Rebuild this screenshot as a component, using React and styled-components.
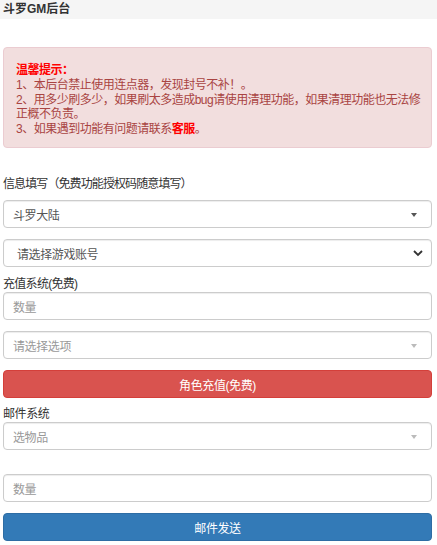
import React from 'react';
import styled, { createGlobalStyle } from 'styled-components';

const GlobalStyle = createGlobalStyle`
  body {
    margin: 0;
    background: #fff;
    font-family: "Liberation Sans", "Noto Sans CJK SC", sans-serif;
    font-size: 12px;
    color: #333;
  }
`;

const Header = styled.div`
  height: 19px;
  line-height: 19px;
  background: #f5f5f5;
  padding-left: 3px;
  font-size: 12px;
  font-weight: bold;
  color: #333;
`;

const Page = styled.div`
  width: 429px;
  padding-left: 3px;
  display: flex;
  flex-direction: column;
  letter-spacing: -0.4px;
`;

const Alert = styled.div`
  margin-top: 28px;
  height: 101px;
  box-sizing: border-box;
  padding: 15px 6px 0 12px;
  background: #f2dede;
  border: 1px solid #ebccd1;
  border-radius: 4px;
  color: #a94442;
  font-size: 12px;
  line-height: 14.8px;
  letter-spacing: -0.5px;
`;

const Strong = styled.b`
  color: #ff0000;
`;

const Label = styled.div`
  margin-top: ${p => p.$mt}px;
  height: ${p => p.$h || 16}px;
  line-height: ${p => p.$h || 16}px;
  font-size: 12px;
  color: #333;
  letter-spacing: ${p => p.$ls || -0.4}px;
`;

const Field = styled.div`
  position: relative;
  margin-top: ${p => p.$mt || 0}px;
  height: 28px;
  box-sizing: border-box;
  border: 1px solid #ccc;
  border-radius: 4px;
  background: #fff;
  box-shadow: inset 0 1px 1px rgba(0, 0, 0, 0.075);
  display: flex;
  align-items: center;
  padding-left: ${p => p.$pl || 9}px;
  font-size: 12px;
  color: ${p => (p.$muted ? '#999' : '#555')};
`;

const Caret = styled.span`
  position: absolute;
  right: 14px;
  top: 12px;
  width: 0;
  height: 0;
  border-left: 3px solid transparent;
  border-right: 3px solid transparent;
  border-top: 4px solid ${p => (p.$light ? '#bbb' : '#555')};
`;

const Chevron = styled.svg`
  position: absolute;
  right: 8px;
  top: 9px;
`;

const Button = styled.div`
  margin-top: ${p => p.$mt}px;
  height: 28px;
  border-radius: 4px;
  background: ${p => p.$bg};
  border: 1px solid ${p => p.$border};
  box-sizing: border-box;
  color: #fff;
  font-size: 12px;
  display: flex;
  align-items: center;
  justify-content: center;
`;

export default function App() {
  return (
    <>
      <GlobalStyle />
      <Header>斗罗GM后台</Header>
      <Page>
        <Alert>
          <Strong>温馨提示：</Strong>
          <br />
          1、本后台禁止使用连点器，发现封号不补！。
          <br />
          2、用多少刷多少，如果刷太多造成bug请使用清理功能，如果清理功能也无法修正概不负责。
          <br />
          3、如果遇到功能有问题请联系<Strong>客服</Strong>。
        </Alert>

        <Label $mt={27} $h={18} $ls={-0.9}>信息填写（免费功能授权码随意填写）</Label>
        <Field $mt={7}>
          斗罗大陆
          <Caret />
        </Field>
        <Field $mt={11} $pl={13}>
          请选择游戏账号
          <Chevron width="10" height="8" viewBox="0 0 10 8">
            <path d="M1 2 L5 6 L9 2" fill="none" stroke="#333" strokeWidth="1.8" />
          </Chevron>
        </Field>

        <Label $mt={9} $ls={-0.7}>充值系统(免费)</Label>
        <Field $muted>数量</Field>
        <Field $mt={11} $muted>
          请选择选项
          <Caret $light />
        </Field>
        <Button $mt={11} $bg="#d9534f" $border="#d43f3a">角色充值(免费)</Button>

        <Label $mt={8}>邮件系统</Label>
        <Field $muted>
          选物品
          <Caret $light />
        </Field>
        <Field $mt={24} $muted>数量</Field>
        <Button $mt={11} $bg="#337ab7" $border="#2e6da4">邮件发送</Button>
      </Page>
    </>
  );
}
